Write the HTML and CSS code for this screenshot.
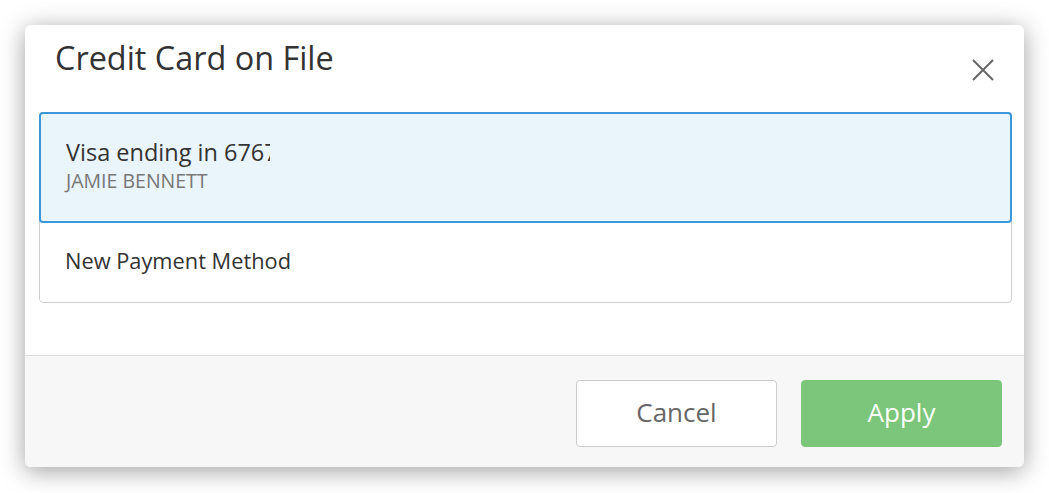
FILE: index.html
```html
<!DOCTYPE html>
<html lang="en">
<head>
<meta charset="utf-8">
<title>Credit Card on File</title>
<link rel="stylesheet" href="styles.css">
</head>
<body>
<div class="dialog">
  <div class="dialog-header">
    <h1 class="dialog-title">Credit Card on File</h1>
    <button class="close-btn" aria-label="Close">
      <svg width="22" height="22" viewBox="0 0 22 22"><path d="M1 1 L21 21 M21 1 L1 21" stroke="#666" stroke-width="2" fill="none"/></svg>
    </button>
  </div>
  <div class="dialog-body">
    <ul class="card-list">
      <li class="card-item selected">
        <span class="card-name">Visa ending in 6767</span>
        <span class="card-holder">JAMIE BENNETT</span>
      </li>
      <li class="card-item new">
        <span class="card-new">New Payment Method</span>
      </li>
    </ul>
  </div>
  <div class="dialog-footer">
    <button class="btn btn-cancel">Cancel</button>
    <button class="btn btn-apply">Apply</button>
  </div>
</div>
</body>
</html>
```
FILE: styles.css
```css
html, body {
  margin: 0;
  padding: 0;
  background: #ffffff;
}
body {
  min-height: 493px;
  box-sizing: border-box;
  padding: 25px 25px 26px 25px;
  font-family: "Open Sans", "Liberation Sans", sans-serif;
  color: #333;
}
.dialog {
  width: 999px;
  background: #fff;
  border-radius: 6px;
  box-shadow: 0 4px 24px rgba(0, 0, 0, 0.38);
  overflow: hidden;
}
.dialog-header {
  position: relative;
  padding: 13px 30px 0 30px;
}
.dialog-title {
  margin: 0;
  font-size: 32.4px;
  line-height: 39px;
  font-weight: 400;
  color: #333;
}
.close-btn {
  position: absolute;
  top: 34px;
  right: 30px;
  width: 22px;
  height: 22px;
  padding: 0;
  border: 0;
  background: none;
  display: block;
}
.close-btn svg { display: block; }
.dialog-body {
  padding: 35px 12px 52px 14px;
}
.card-list {
  list-style: none;
  margin: 0;
  padding: 0;
  border: 1px solid #cfcfcf;
  border-radius: 4px;
}
.card-item {
  display: flex;
  flex-direction: column;
}
.card-item.selected {
  position: relative;
  margin: -1px -1px 0 -1px;
  border: 2px solid #3b97d8;
  border-radius: 4px;
  background: #e9f4fb;
  padding: 22px 25px 27px 25px;
}
.card-name {
  width: 204px;
  overflow: hidden;
  white-space: nowrap;
  font-size: 23.5px;
  line-height: 32px;
  color: #333;
}
.card-holder {
  font-size: 19.5px;
  line-height: 26px;
  color: #777;
}
.card-item.new {
  padding: 24px 25px 27px 25px;
}
.card-new {
  font-size: 21.8px;
  line-height: 28px;
  color: #333;
}
.dialog-footer {
  border-top: 1px solid #dcdcdc;
  background: #f7f7f7;
  padding: 24px 22px 20px 0;
  display: flex;
  justify-content: flex-end;
  gap: 24px;
}
.btn {
  width: 201px;
  height: 67px;
  border-radius: 4px;
  font-family: "Open Sans", "Liberation Sans", sans-serif;
  font-size: 26px;
  padding: 0 0 3px 0;
  cursor: pointer;
}
.btn-cancel {
  background: #fff;
  border: 1px solid #cccccc;
  color: #666;
}
.btn-apply {
  background: #7bc67a;
  border: 1px solid #7bc67a;
  color: #fff;
}
```
